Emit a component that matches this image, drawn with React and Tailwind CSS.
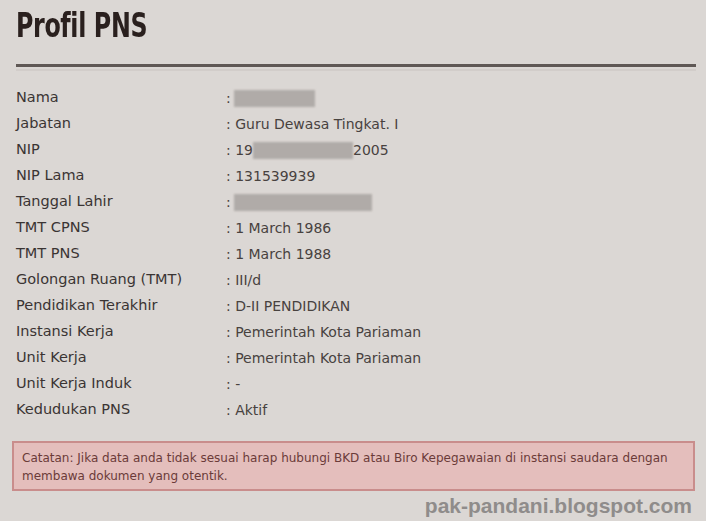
import React from "react";

const rows = [
  ["Nama", { blur: [0, 81] }],
  ["Jabatan", ": Guru Dewasa Tingkat. I"],
  ["NIP", { nip: true }],
  ["NIP Lama", ": 131539939"],
  ["Tanggal Lahir", { blur: [0, 138] }],
  ["TMT CPNS", ": 1 March 1986"],
  ["TMT PNS", ": 1 March 1988"],
  ["Golongan Ruang (TMT)", ": III/d"],
  ["Pendidikan Terakhir", ": D-II PENDIDIKAN"],
  ["Instansi Kerja", ": Pemerintah Kota Pariaman"],
  ["Unit Kerja", ": Pemerintah Kota Pariaman"],
  ["Unit Kerja Induk", ": -"],
  ["Kedudukan PNS", ": Aktif"],
];

function Value({ v }) {
  if (typeof v === "string") return <span>{v}</span>;
  if (v.nip)
    return (
      <span className="flex items-center">
        <span>: 19</span>
        <span className="inline-block w-[100px] h-[17px] bg-[#b0aba8] blur-[1px]" />
        <span>2005</span>
      </span>
    );
  return (
    <span className="flex items-center">
      <span>:</span>
      <span
        className="inline-block h-[17px] bg-[#b0aba8] blur-[1px] ml-[3px]"
        style={{ width: v.blur[1] }}
      />
    </span>
  );
}

export default function App() {
  return (
    <div className="w-[706px] h-[521px] bg-[#dbd7d4] overflow-hidden" style={{ fontFamily: '"DejaVu Sans", sans-serif' }}>
      <div className="pl-4 pr-[10px]">
        <h1
          className="pt-[6px] text-[33px] leading-[40px] font-bold text-[#2a201e] origin-left scale-x-[0.72] tracking-[-0.5px]"
          style={{ fontFamily: '"DejaVu Sans", sans-serif' }}
        >
          Profil PNS
        </h1>
        <div className="mt-[18px] h-[3px] bg-[#5f5855]" />
        <div className="mt-[2px] h-[2px] bg-[#d2cdca]" />
        <div className="mt-[14px] grid grid-cols-[210px_1fr] text-[14.5px] text-[#3a3433]">
          {rows.map(([k, v]) => (
            <React.Fragment key={k}>
              <div className="h-[26px] flex items-center">{k}</div>
              <div className="h-[26px] flex items-center text-[14px] text-[#48423f]">
                <Value v={v} />
              </div>
            </React.Fragment>
          ))}
        </div>
      </div>
      <div className="mt-[18px] ml-3 mr-[11px] h-[50px] border-2 border-[#c98d8c] bg-[#e4bebc] px-2 py-[6px] text-[12px] leading-[18px] text-[#6b3b39]">
        Catatan: Jika data anda tidak sesuai harap hubungi BKD atau Biro Kepegawaian di instansi saudara dengan membawa dokumen yang otentik.
      </div>
      <div
        className="mt-[1px] pr-[14px] text-right text-[21px] font-bold text-[#8f8c8b] leading-[28px]"
        style={{ fontFamily: '"Liberation Sans", Arial, sans-serif' }}
      >
        pak-pandani.blogspot.com
      </div>
    </div>
  );
}
